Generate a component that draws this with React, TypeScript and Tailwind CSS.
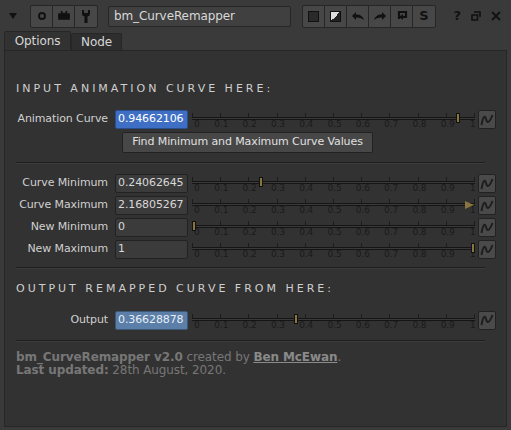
import React from "react";

const TICKS = [0, 0.1, 0.2, 0.3, 0.4, 0.5, 0.6, 0.7, 0.8, 0.9, 1];

function CurveButton() {
  return (
    <div className="flex h-[19px] w-[18px] shrink-0 items-center justify-center rounded-[2px] border border-[#222] bg-[#4a4a4a]">
      <svg width="14" height="12" viewBox="0 0 14 12">
        <path d="M1.5 11 C3 2, 5 1, 6 5 C7 9, 9 10, 12.5 1" fill="none" stroke="#1e1e1e" strokeWidth="2" />
      </svg>
    </div>
  );
}

function Slider({ value, arrow }: { value: number; arrow?: boolean }) {
  const pos = Math.min(value, 1);
  return (
    <div className="relative h-[19px] flex-1">
      <div className="absolute left-0 right-0 top-[7px] h-[3px] border-y border-[#151515] bg-[#3a3a3a]" />
      {TICKS.map((t) => (
        <React.Fragment key={t}>
          <div className="absolute top-[3px] h-[4px] w-px bg-[#1c1c1c]" style={{ left: `calc(${t * 100}% - ${t}px)` }} />
          <div
            className="absolute top-[10px] text-[9px] leading-none text-[#1a1a1a]"
            style={{ left: `calc(${t * 100}% + ${t === 0 ? 2 : t === 1 ? -5 : -6}px)` }}
          >
            {t}
          </div>
        </React.Fragment>
      ))}
      {arrow ? (
        <div className="absolute right-[1px] top-[5px] h-0 w-0 border-y-[4px] border-l-[9px] border-y-transparent border-l-[#8a7440]" />
      ) : (
        <div
          className="absolute top-[3px] h-[10px] w-[4px] border border-[#111] bg-[#8a7440]"
          style={{ left: `calc(${pos * 100}% - ${pos * 4}px)` }}
        />
      )}
    </div>
  );
}

function Row({ label, value, num, hl, arrow }: { label: string; value: string; num: number; hl?: "blue" | "steel"; arrow?: boolean }) {
  const field =
    hl === "blue" ? "bg-[#3f6fc4] text-white border-[#2a4f8f]" : hl === "steel" ? "bg-[#5b7fa8] text-[#e8eef5] border-[#3c5877]" : "bg-[#3b3b3b] text-[#d8d8d8] border-[#222]";
  return (
    <div className="flex h-[22px] items-center">
      <div className="w-[110px] whitespace-nowrap pr-[7px] text-right text-[#d0d0d0]">{label}</div>
      <div className={`flex h-[19px] w-[73px] items-center overflow-hidden whitespace-nowrap rounded-[2px] border px-[2px] ${field}`}>{value}</div>
      <div className="ml-[4px] mr-[3px] flex flex-1 items-center">
        <Slider value={num} arrow={arrow} />
      </div>
      <CurveButton />
    </div>
  );
}

function Heading({ children }: { children: string }) {
  return <div className="pl-[11px] text-[11px] tracking-[3px] text-[#cfcfcf]">{children}</div>;
}

function Sep() {
  return <div className="mx-[11px] h-px bg-[#1f1f1f] shadow-[0_1px_0_#3c3c3c]" />;
}

function HBtn({ children }: { children: React.ReactNode }) {
  return <div className="flex h-[21px] w-[22px] items-center justify-center border-r border-[#262626] last:border-r-0">{children}</div>;
}

export default function App() {
  return (
    <div
      className="flex h-[430px] w-[511px] flex-col bg-[#3a3a3a] text-[11px] tracking-[-0.1px]"
      style={{ fontFamily: '"DejaVu Sans", Verdana, sans-serif' }}
    >
      {/* header */}
      <div className="flex h-[32px] items-center px-[4px]">
        <div className="ml-[5px] mr-[13px] h-0 w-0 border-x-[4px] border-t-[6px] border-x-transparent border-t-[#111]" />
        <div className="flex h-[23px] items-center rounded-[2px] border border-[#262626] bg-[#474747]">
          <HBtn>
            <div className="h-[8px] w-[8px] rounded-full border-2 border-[#111]" />
          </HBtn>
          <HBtn>
            <svg width="12" height="10" viewBox="0 0 12 10"><path d="M3 0 L5 3 M9 0 L7 3 M1 3 H11 V8 H1 Z M0 5 H12" stroke="#111" strokeWidth="1.6" fill="#111" /></svg>
          </HBtn>
          <HBtn>
            <svg width="10" height="13" viewBox="0 0 10 13"><path d="M1 0 V4 Q1 6 3.5 6.5 V13 H6.5 V6.5 Q9 6 9 4 V0 H7 V3 H3 V0 Z" fill="#111" /></svg>
          </HBtn>
        </div>
        <div className="ml-[10px] flex h-[21px] w-[183px] items-center rounded-[2px] border border-[#262626] bg-[#404040] px-[5px] text-[12px] text-[#d8d8d8]">bm_CurveRemapper</div>
        <div className="ml-[11px] flex h-[23px] items-center rounded-[2px] border border-[#262626] bg-[#474747]">
          <HBtn><div className="h-[11px] w-[11px] border border-[#111] bg-[#2a2a2a]" /></HBtn>
          <HBtn><div className="h-[11px] w-[11px] border border-[#111] bg-[linear-gradient(135deg,#ddd_50%,#222_50%)]" /></HBtn>
          <HBtn><svg width="14" height="10" viewBox="0 0 14 10"><path d="M1 5 L5 1 V3.5 Q11 3 13 9 Q10 6 5 6.5 V9 Z" fill="#111" /></svg></HBtn>
          <HBtn><svg width="14" height="10" viewBox="0 0 14 10"><path d="M13 5 L9 1 V3.5 Q3 3 1 9 Q4 6 9 6.5 V9 Z" fill="#111" /></svg></HBtn>
          <HBtn><svg width="12" height="12" viewBox="0 0 12 12"><path d="M3 9 V2 H10 V7 H6" fill="none" stroke="#111" strokeWidth="2.2" /><path d="M3 7 L7 4 V10 Z" fill="#111" /></svg></HBtn>
          <HBtn><span className="text-[13px] font-bold text-[#111]">S</span></HBtn>
        </div>
        <div className="ml-auto mr-[6px] flex items-center gap-[10px] text-[13px] font-bold text-[#111]">
          <span>?</span>
          <svg width="10" height="10" viewBox="0 0 10 10"><path d="M3 1 H9 V6 M1 4 H6.5 V9 H1 Z" fill="none" stroke="#111" strokeWidth="1.6" /></svg>
          <svg width="10" height="10" viewBox="0 0 10 10"><path d="M1 1 L9 9 M9 1 L1 9" stroke="#111" strokeWidth="1.8" /></svg>
        </div>
      </div>

      {/* tabs */}
      <div className="flex h-[18px] items-end px-[4px] text-[12px]">
        <div className="flex h-[19px] w-[67px] items-center justify-center rounded-t-[2px] border border-b-0 border-[#262626] bg-[#323232] text-[#d6d6d6]">Options</div>
        <div className="flex h-[17px] w-[51px] items-center justify-center rounded-t-[2px] border border-b-0 border-[#262626] bg-[#2e2e2e] text-[#d6d6d6]">Node</div>
      </div>

      {/* body */}
      <div className="mx-[4px] mb-[3px] flex flex-1 flex-col border border-[#262626] bg-[#323232] pr-[10px]">
        <div className="pt-[30px]"><Heading>INPUT ANIMATION CURVE HERE:</Heading></div>
        <div className="mt-[11px]"><Row label="Animation Curve" value="0.94662106" num={0.94662106} hl="blue" /></div>
        <div className="ml-[117px] mt-[1px] flex h-[21px] w-[251px] items-center justify-center whitespace-nowrap rounded-[2px] border border-[#222] bg-[#474747] text-[#e0e0e0]">
          Find Minimum and Maximum Curve Values
        </div>
        <div className="mt-[9px]"><Sep /></div>
        <div className="mt-[10px]">
          <Row label="Curve Minimum" value="0.24062645" num={0.24062645} />
          <Row label="Curve Maximum" value="2.16805267" num={2.16805267} arrow />
          <Row label="New Minimum" value="0" num={0} />
          <Row label="New Maximum" value="1" num={1} />
        </div>
        <div className="mt-[6px]"><Sep /></div>
        <div className="mt-[13px]"><Heading>OUTPUT REMAPPED CURVE FROM HERE:</Heading></div>
        <div className="mt-[12px]"><Row label="Output" value="0.36628878" num={0.36628878} hl="steel" /></div>
        <div className="mt-[9px]"><Sep /></div>
        <div className="mt-[10px] pl-[11px] text-[12px] leading-[13px] text-[#777]">
          <div>
            <b>bm_CurveRemapper v2.0</b> created by <b className="text-[#8a8a8a] underline">Ben McEwan</b>.
          </div>
          <div>
            <b>Last updated:</b> 28th August, 2020.
          </div>
        </div>
      </div>
    </div>
  );
}
